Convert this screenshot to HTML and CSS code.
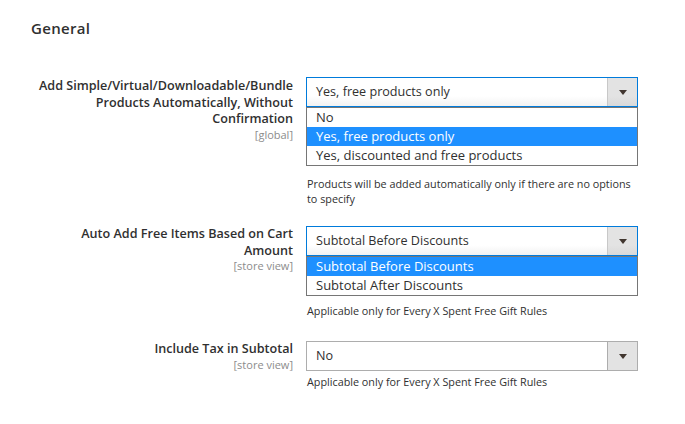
FILE: index.html
```html
<!DOCTYPE html>
<html lang="en">
<head>
<meta charset="utf-8">
<title>General</title>
<link rel="stylesheet" href="styles.css">
</head>
<body>
<div class="page">
  <h2 class="section-title">General</h2>

  <div class="row row-first">
    <div class="label">
      <span class="label-text">Add Simple/Virtual/Downloadable/Bundle Products Automatically, Without Confirmation</span>
      <span class="scope">[global]</span>
    </div>
    <div class="control">
      <div class="select focused">
        <span class="select-value">Yes, free products only</span>
        <span class="select-btn"><span class="arrow"></span></span>
      </div>
      <ul class="dropdown">
        <li class="option">No</li>
        <li class="option selected">Yes, free products only</li>
        <li class="option">Yes, discounted and free products</li>
      </ul>
      <p class="note note-after-list">Products will be added automatically only if there are no options to specify</p>
    </div>
  </div>

  <div class="row row-second">
    <div class="label">
      <span class="label-text">Auto Add Free Items Based on Cart Amount</span>
      <span class="scope">[store view]</span>
    </div>
    <div class="control">
      <div class="select focused">
        <span class="select-value">Subtotal Before Discounts</span>
        <span class="select-btn"><span class="arrow"></span></span>
      </div>
      <ul class="dropdown">
        <li class="option selected">Subtotal Before Discounts</li>
        <li class="option">Subtotal After Discounts</li>
      </ul>
      <p class="note note-after-list-tight">Applicable only for Every X Spent Free Gift Rules</p>
    </div>
  </div>

  <div class="row row-third">
    <div class="label">
      <span class="label-text">Include Tax in Subtotal</span>
      <span class="scope">[store view]</span>
    </div>
    <div class="control">
      <div class="select">
        <span class="select-value">No</span>
        <span class="select-btn"><span class="arrow"></span></span>
      </div>
      <p class="note">Applicable only for Every X Spent Free Gift Rules</p>
    </div>
  </div>
</div>
</body>
</html>
```

FILE: styles.css
```css
* {
  box-sizing: border-box;
}

html, body {
  margin: 0;
  padding: 0;
  background: #ffffff;
}

body {
  font-family: "Open Sans", "Noto Sans", sans-serif;
  color: #303030;
}

.page {
  width: 685px;
  padding-top: 18px;
}

.section-title {
  margin: 0 0 0 31px;
  font-size: 15px;
  line-height: 20px;
  font-weight: 600;
  color: #303030;
  letter-spacing: 0.3px;
}

.row {
  display: grid;
  grid-template-columns: 293px 332px;
  column-gap: 13px;
  align-items: start;
}

.row-first {
  margin-top: 39px;
}

.row-second {
  margin-top: 20px;
}

.row-third {
  margin-top: 23px;
}

.label {
  display: flex;
  flex-direction: column;
  align-items: flex-end;
  text-align: right;
  padding-top: 1px;
  padding-left: 30px;
}

.row-second .label,
.row-third .label {
  padding-top: 0;
}

.label-text {
  font-size: 12.6px;
  line-height: 16.5px;
  font-weight: 600;
  color: #303030;
}

.scope {
  font-size: 11px;
  line-height: 13px;
  color: #8c8c8c;
}

.control {
  display: flex;
  flex-direction: column;
}

.select {
  position: relative;
  height: 30px;
  border: 1px solid #adadad;
  background: #ffffff;
  display: flex;
  align-items: center;
}

.select.focused {
  border-color: #007bdb;
  background: linear-gradient(to bottom, #ffffff 0%, #ffffff 65%, #f2f2f2 100%);
}

.select-value {
  flex: 1;
  padding-left: 9px;
  font-size: 12.6px;
  line-height: 18px;
  color: #303030;
}

.select-btn {
  width: 30px;
  height: 100%;
  background: #e3e3e3;
  border-left: 1px solid #adadad;
  display: flex;
  align-items: center;
  justify-content: center;
}

.select.focused .select-btn {
  background: linear-gradient(to bottom, #e3e3e3 0%, #e3e3e3 65%, #d9d9d9 100%);
  border-left-color: #c8c8c8;
}

.arrow {
  width: 0;
  height: 0;
  border-left: 4px solid transparent;
  border-right: 4px solid transparent;
  border-top: 5px solid #41362f;
  margin-left: 1px;
}

.dropdown {
  list-style: none;
  margin: 0;
  padding: 0;
  border: 1px solid #767676;
  background: #ffffff;
}

.option {
  height: 19px;
  line-height: 19px;
  padding-left: 9px;
  font-size: 13px;
  color: #303030;
  white-space: nowrap;
}

.option.selected {
  background: #1e90ff;
  color: #ffffff;
}

.note {
  margin: 3px 0 0 1px;
  font-size: 10.8px;
  line-height: 15px;
  color: #303030;
}

.note-after-list {
  margin-top: 10px;
}

.note-after-list-tight {
  margin-top: 7px;
}
```
